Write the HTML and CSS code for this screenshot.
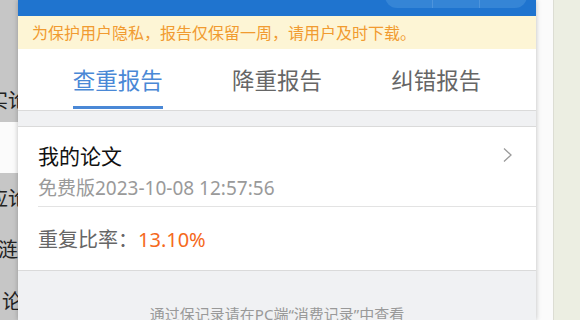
FILE: index.html
```html
<!DOCTYPE html>
<html lang="zh">
<head>
<meta charset="utf-8">
<link rel="stylesheet" href="styles.css">
</head>
<body>
<div class="page">
  <div class="behind">
    <div class="behind-gray">
      <div class="bchar c1">型</div>
      <div class="bchar c2">实论</div>
    </div>
    <div class="behind-white"></div>
    <div class="behind-gray2">
      <div class="bchar c3">应论</div>
      <div class="bchar c4">涟</div>
      <div class="bchar c5">论</div>
    </div>
  </div>
  <div class="panel">
    <div class="topbar">
      <div class="capsule"><span></span><span></span><span></span></div>
    </div>
    <div class="notice">为保护用户隐私，报告仅保留一周，请用户及时下载。</div>
    <div class="tabs">
      <div class="tab active"><span>查重报告</span></div>
      <div class="tab"><span>降重报告</span></div>
      <div class="tab"><span>纠错报告</span></div>
    </div>
    <div class="gap"></div>
    <div class="card">
      <div class="card-head">
        <div class="card-info">
          <div class="title">我的论文</div>
          <div class="date">免费版2023-10-08 12:57:56</div>
        </div>
        <svg class="chev" width="12" height="16" viewBox="0 0 12 16"><path d="M2 1.5 L9 8 L2 14.5" fill="none" stroke="#9a9a9a" stroke-width="1.3"/></svg>
      </div>
      <div class="rate"><span class="label">重复比率：</span><span class="value">13.10%</span></div>
    </div>
    <div class="footer">通过保记录请在PC端“消费记录”中查看</div>
  </div>
  <div class="gutter"></div>
  <div class="desk"></div>
</div>
</body>
</html>
```
FILE: styles.css
```css
html, body {
  margin: 0;
  padding: 0;
  height: 100%;
  overflow: hidden;
}
body {
  font-family: "Noto Sans", "Noto Sans CJK SC", sans-serif;
  background: #eceee2;
}
.page {
  display: flex;
  height: 320px;
  width: 580px;
}
.behind {
  width: 18px;
  flex: none;
  display: flex;
  flex-direction: column;
  overflow: hidden;
}
.behind > div { flex: none; }
.behind-gray {
  height: 122px;
  background: #c6c6c6;
  overflow: hidden;
}
.behind-white {
  height: 51px;
  background: #fbfbfb;
}
.behind > .behind-gray2 {
  flex: 1;
  background: #c6c6c6;
  overflow: hidden;
}
.bchar {
  font-family: "Noto Sans CJK SC", sans-serif;
  font-size: 20px;
  line-height: 20px;
  color: #222;
  white-space: nowrap;
  margin-left: -12px;
}
.c1 { margin-top: 30px; margin-left: -18px; font-size: 14px; }
.c2 { margin-top: 40px; }
.c3 { margin-top: 15px; }
.c4 { margin-top: 31px; margin-left: -2px; }
.c5 { margin-top: 32px; margin-left: 2px; }
.panel {
  width: 518px;
  flex: none;
  background: #f0f1f3;
  display: flex;
  flex-direction: column;
  box-shadow: 0 0 5px rgba(0,0,0,0.25);
  position: relative;
  z-index: 1;
  overflow: hidden;
}
.panel > * { flex: none; }
.topbar {
  height: 16px;
  background: #1f74cf;
  display: flex;
  justify-content: flex-end;
  padding-right: 9px;
}
.capsule {
  width: 142px;
  height: 24px;
  margin-top: -16px;
  border-radius: 0 0 12px 12px;
  background: #3585d6;
  display: flex;
}
.capsule span {
  flex: 1;
  border-left: 1px solid #4d94dc;
}
.capsule span:first-child { border-left: none; }
.notice {
  height: 33px;
  background: #fdf5d5;
  color: #f19b30;
  font-size: 16px;
  line-height: 33px;
  padding-left: 14px;
  font-family: "Noto Sans CJK SC", sans-serif;
}
.tabs {
  height: 61px;
  background: #fff;
  border-bottom: 1px solid #dadada;
  display: flex;
  padding: 0 20px;
}
.tab {
  flex: 1;
  display: flex;
  justify-content: center;
}
.tab span {
  font-family: "Noto Sans CJK SC", sans-serif;
  font-size: 22.5px;
  line-height: 60px;
  height: 57px;
  color: #666;
}
.tab.active span {
  color: #4a88d6;
  border-bottom: 3px solid #4a88d6;
}
.gap {
  height: 15px;
}
.card {
  background: #fff;
  border-top: 1px solid #dadada;
  border-bottom: 1px solid #dadada;
  padding-left: 20px;
}
.card-head {
  display: flex;
  align-items: flex-start;
  border-bottom: 1px solid #e3e3e3;
  height: 79px;
}
.card-info {
  flex: 1;
  padding-top: 13px;
}
.title {
  font-family: "Noto Sans CJK SC", sans-serif;
  font-size: 21px;
  line-height: 30px;
  color: #111;
}
.date {
  font-size: 19px;
  line-height: 30px;
  color: #9a9a9a;
  margin-top: 3px;
}
.chev {
  margin-top: 20px;
  margin-right: 22px;
}
.rate {
  height: 63px;
  line-height: 63px;
  font-size: 20px;
}
.rate .label {
  font-family: "Noto Sans CJK SC", sans-serif;
  color: #666;
}
.rate .value {
  color: #f5691c;
}
.footer {
  text-align: center;
  font-size: 15px;
  line-height: 20px;
  color: #999;
  padding-top: 33px;
}
.gutter {
  width: 17px;
  flex: none;
  background: #fbfbfb;
  border-right: 1px solid #dcddd3;
}
.desk {
  flex: 1;
  background: #eceee2;
}
```
